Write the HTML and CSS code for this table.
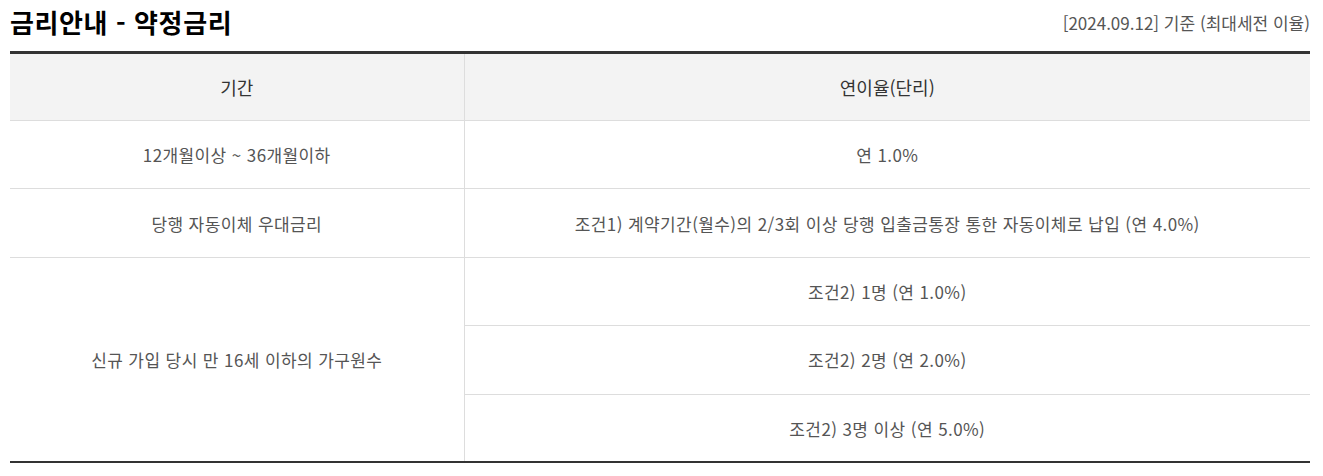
FILE: index.html
```html
<!DOCTYPE html>
<html lang="ko">
<head>
<meta charset="utf-8">
<title>금리안내 - 약정금리</title>
<link rel="stylesheet" href="styles.css">
</head>
<body>
<div class="wrap">
  <div class="head">
    <h2 class="title">금리안내 - 약정금리</h2>
    <span class="date">[2024.09.12] 기준 (최대세전 이율)</span>
  </div>
  <table class="rate">
    <colgroup><col class="c1"><col class="c2"></colgroup>
    <thead>
      <tr><th>기간</th><th>연이율(단리)</th></tr>
    </thead>
    <tbody>
      <tr><td>12개월이상 ~ 36개월이하</td><td>연 1.0%</td></tr>
      <tr><td>당행 자동이체 우대금리</td><td>조건1) 계약기간(월수)의 2/3회 이상 당행 입출금통장 통한 자동이체로 납입 (연 4.0%)</td></tr>
      <tr><td rowspan="3">신규 가입 당시 만 16세 이하의 가구원수</td><td>조건2) 1명 (연 1.0%)</td></tr>
      <tr><td>조건2) 2명 (연 2.0%)</td></tr>
      <tr class="last"><td>조건2) 3명 이상 (연 5.0%)</td></tr>
    </tbody>
  </table>
</div>
</body>
</html>
```
FILE: styles.css
```css
* { box-sizing: border-box; }
html, body { margin: 0; padding: 0; background: #fff; }
body {
  font-family: "Noto Sans CJK KR", "Noto Sans", sans-serif;
  color: #555;
}
.wrap { padding: 0 13px 0 10px; }
.head {
  display: flex;
  justify-content: space-between;
  align-items: center;
  height: 44px;
  margin-bottom: 7px;
}
.title {
  margin: 0;
  font-size: 26px;
  font-weight: 700;
  color: #000;
  line-height: 32px;
  letter-spacing: 0.6px;
}
.date {
  font-size: 17px;
  color: #555;
  line-height: 22px;
  padding-top: 2px;
}
.rate {
  width: 100%;
  border-collapse: collapse;
  border-top: 3px solid #333;
  border-bottom: 2px solid #333;
  table-layout: fixed;
}
.c1 { width: 454px; }
.rate th, .rate td {
  text-align: center;
  vertical-align: middle;
  padding: 0;
  border-bottom: 1px solid #ddd;
  border-left: 1px solid #ddd;
}
.rate th:first-child, .rate tbody tr:first-child td:first-child,
.rate tbody tr:nth-child(2) td:first-child,
.rate tbody tr:nth-child(3) td:first-child { border-left: 0; }
.rate th {
  background: #f3f3f3;
  height: 68px;
  font-size: 18px;
  font-weight: 400;
  color: #333;
}
.rate td {
  height: 68.4px;
  font-size: 17px;
  letter-spacing: 0.4px;
  color: #555;
}
.rate tr.last td { border-bottom: 0; }
.rate tbody tr:nth-child(3) td:first-child { border-bottom: 0; }
```
